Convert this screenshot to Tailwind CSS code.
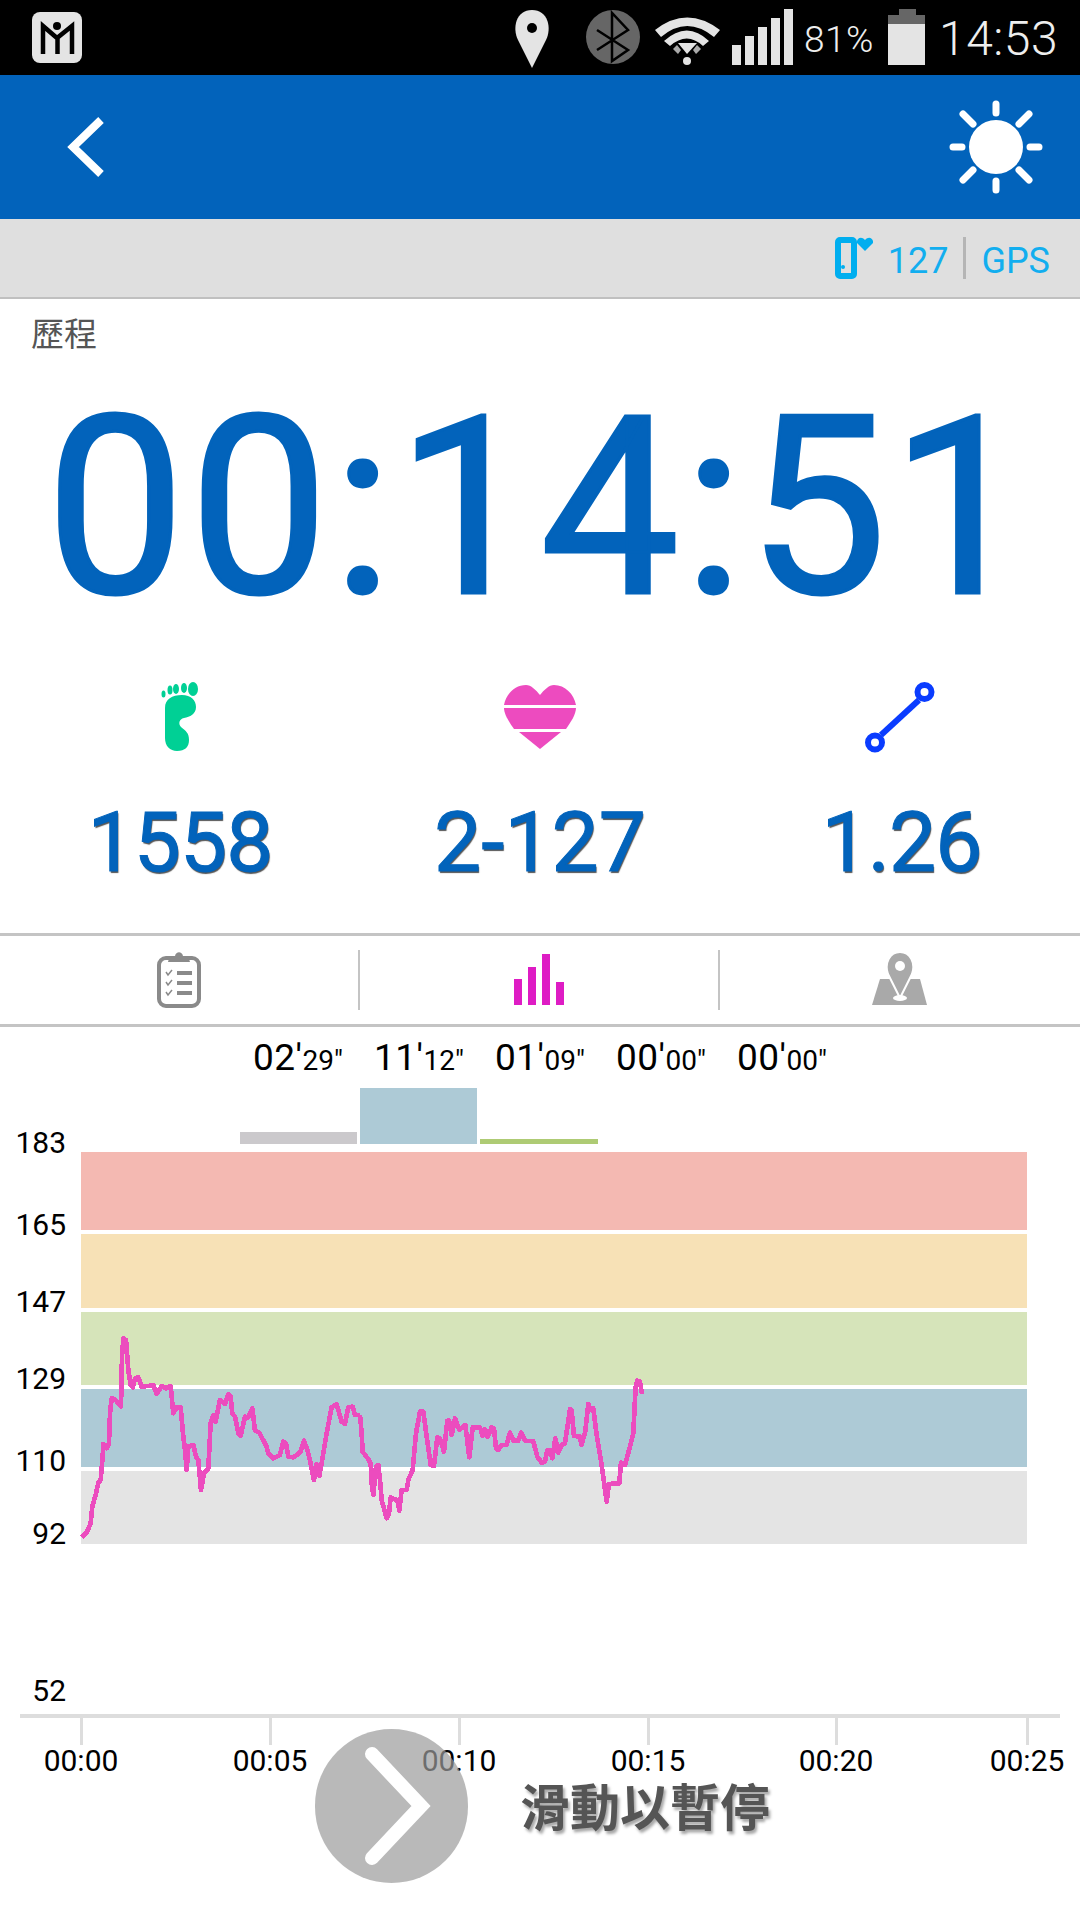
<!doctype html>
<html lang="zh-Hant">
<head>
<meta charset="UTF-8" />
<title>歷程</title>
<script src="https://cdn.jsdelivr.net/npm/@tailwindcss/browser@4"></script>
</head>
<body class="bg-white">
<div class="relative w-[1080px] h-[1920px] overflow-hidden bg-white [font-family:Roboto,sans-serif]">

	<!-- status bar -->
	<div class="relative h-[75px] bg-black">
		<svg class="absolute left-0 top-0" width="1080" height="75" viewBox="0 0 1080 75">
			<rect x="32" y="12" width="50" height="51" rx="8" fill="#e4e4e4"/>
			<path d="M43 54V26L57 38L72 26V54M57.500 38V54" fill="none" stroke="#000" stroke-width="4.500"/>
			<circle cx="57" cy="26" r="4" fill="#000"/>
			<path d="M532 68L518 40C512 28 516 10 532 10C548 10 552 28 546 40Z" fill="#e4e4e4"/>
			<circle cx="532" cy="28" r="5" fill="#000"/>
			<circle cx="613" cy="37" r="27" fill="#666"/>
			<path d="M597 50L628 30L612 13V61L628 50L597 30" fill="none" stroke="#000" stroke-width="2.500"/>
			<path d="M655 30Q687 5 720 30L714 37Q687 15 661 37Z" fill="#e4e4e4"/>
			<path d="M664 41Q687 20 709 41L703 46Q687 31 670 46Z" fill="#e4e4e4"/>
			<path d="M678 43H697L687 54Z" fill="#e4e4e4"/>
			<path d="M673 49L677 45L681 50L678 54ZM701 49L697 45L693 50L696 54Z" fill="#aaa"/>
			<circle cx="687" cy="61" r="4" fill="#e4e4e4"/>
			<path d="M732 45h9v20h-9zM745 36h9v29h-9zM758 27h9v38h-9zM771 18h9v47h-9zM784 9h9v56h-9z" fill="#e4e4e4"/>
			<rect x="899" y="9" width="17" height="6" fill="#666"/>
			<rect x="888" y="15" width="37" height="9" fill="#666"/>
			<rect x="888" y="24" width="37" height="41" fill="#e4e4e4"/>
		</svg>
		<span class="absolute left-[804px] top-[18px] text-[37px] leading-[44px] font-light tracking-[0.5px] text-[#eee]">81%</span>
		<span class="absolute left-[939px] top-[11px] text-[48px] leading-[56px] font-light tracking-[0.5px] text-[#eee]">14:53</span>
	</div>

	<!-- title bar -->
	<div class="flex h-[144px] items-center justify-between bg-[#0263bb] pl-[64px] pr-[36px]">
		<svg width="44" height="64" viewBox="64 115 44 64">
			<path d="M101 120L73 147L101 174" fill="none" stroke="#fff" stroke-width="8"/>
		</svg>
		<svg width="96" height="96" viewBox="948 99 96 96">
			<circle cx="996" cy="147" r="27" fill="#fff"/>
			<path d="M996 104V113M996 181V190M953 147H962M1030 147H1039M963 114L973 124M1029 114L1019 124M963 180L973 170M1029 180L1019 170" stroke="#fff" stroke-width="7" stroke-linecap="round"/>
		</svg>
	</div>

	<!-- sensor bar -->
	<div class="flex h-[80px] items-center justify-end border-b-2 border-[#c0c0c0] bg-[#dfdfdf] pr-[30px] text-[36px] text-[#12aeef]">
		<svg class="mr-[15px]" width="38" height="42" viewBox="835 237 38 42">
			<rect x="838" y="240" width="16" height="36" rx="2" fill="none" stroke="#00aeef" stroke-width="6"/>
			<rect x="843" y="238" width="5" height="3" fill="#00aeef"/>
			<circle cx="843" cy="267" r="2" fill="#00aeef"/>
			<path d="M865 251L857 243C856 239 861 235 865 240C869 235 874 239 873 243Z" fill="#00aeef"/>
		</svg>
		<span class="mt-[6px]">127</span>
		<span class="mx-[15px] h-[42px] w-[3px] bg-[#b5b5b5]"></span>
		<span class="mt-[6px]">GPS</span>
	</div>

	<!-- session timer -->
	<div class="h-[634px]">
		<p class="pl-[31px] pt-[13px] text-[33px] leading-[40px] text-[#555] [font-family:'Noto_Sans_CJK_TC',sans-serif]">歷程</p>
		<p class="mt-[13px] text-center text-[248px] leading-[287px] tracking-[4px] text-[#0263bb] [-webkit-text-stroke:3px_#0263bb]">00:14:51</p>
		<div class="mt-[29px] grid grid-cols-3">
			<div class="flex flex-col items-center">
				<svg class="ml-[-1px] h-[72px]" width="40" height="72" viewBox="160 681 40 72">
					<ellipse cx="193" cy="689" rx="5" ry="7" fill="#00d095"/>
					<ellipse cx="184" cy="688" rx="3" ry="5" fill="#00d095"/>
					<ellipse cx="176" cy="689" rx="3" ry="5" fill="#00d095"/>
					<ellipse cx="170" cy="690" rx="2.500" ry="4.500" fill="#00d095"/>
					<ellipse cx="163.500" cy="694" rx="2" ry="3.500" fill="#00d095"/>
					<path d="M165 708C165 699 172 695 182 695C191 695 196 700 196 707C196 714 190 717 184 718C179 719 178 724 181 727C186 731 189 733 189 740C189 747 185 751 177 751C170 751 165 746 165 738Z" fill="#00d095"/>
				</svg>
			</div>
			<div class="flex flex-col items-center">
				<svg class="h-[72px]" width="76" height="72" viewBox="502 681 76 72">
					<path d="M540 695C536 690 531 685 526 685C515 685 506 694 504 705H576C574 694 565 685 554 685C549 685 544 690 540 695Z" fill="#ed4bbf"/>
					<path d="M504 708H576C576 714 571 722 566 729H514C509 722 504 714 504 708Z" fill="#ed4bbf"/>
					<path d="M519 732H561L540 749Z" fill="#ed4bbf"/>
				</svg>
			</div>
			<div class="flex flex-col items-center">
				<svg class="ml-[-1px] h-[72px]" width="72" height="72" viewBox="864 681 72 72">
					<path d="M919 700L881 735" stroke="#0a3cff" stroke-width="6"/>
					<circle cx="924.500" cy="692" r="7" fill="#fff" stroke="#0a3cff" stroke-width="6"/>
					<circle cx="875" cy="742.500" r="7" fill="#fff" stroke="#0a3cff" stroke-width="6"/>
				</svg>
			</div>
			<p class="mt-[42px] text-center text-[84px] leading-[96px] tracking-[-1px] text-[#0263bb] [-webkit-text-stroke:1px_#0263bb] [text-shadow:1px_2px_1px_#555]">1558</p>
			<p class="mt-[42px] text-center text-[84px] leading-[96px] text-[#0263bb] [-webkit-text-stroke:1px_#0263bb] [text-shadow:1px_2px_1px_#555]">2-127</p>
			<p class="mt-[42px] pl-[3px] text-center text-[84px] leading-[96px] tracking-[-1px] text-[#0263bb] [-webkit-text-stroke:1px_#0263bb] [text-shadow:1px_2px_1px_#555]">1.26</p>
		</div>
	</div>

	<!-- tabs -->
	<div class="grid h-[94px] grid-cols-3 items-center border-y-[3px] border-[#c4c4c4]">
		<div class="flex h-[60px] items-center justify-center border-r-2 border-[#c4c4c4]">
			<svg width="48" height="60" viewBox="155 950 48 60">
				<rect x="159" y="958" width="40" height="48" rx="7" fill="none" stroke="#8a8a8a" stroke-width="4"/>
				<path d="M168 962C169 957 173 957 175 956C176 951 182 951 183 956C185 957 189 957 190 962Z" fill="#8a8a8a"/>
				<path d="M166 972l2 3l4 -5M166 982l2 3l4 -5M166 992l2 3l4 -5" fill="none" stroke="#8a8a8a" stroke-width="1.500"/>
				<path d="M177 973H192M177 983H192M177 993H192" stroke="#8a8a8a" stroke-width="4"/>
			</svg>
		</div>
		<div class="flex h-[60px] items-center justify-center border-r-2 border-[#c4c4c4]">
			<svg width="52" height="54" viewBox="514 954 52 54">
				<path d="M515 980h8v26h-8zM529 968h8v38h-8zM543 955h8v51h-8zM557 983h8v23h-8z" fill="#de1cc4"/>
			</svg>
		</div>
		<div class="flex h-[60px] items-center justify-center">
			<svg width="58" height="54" viewBox="871 954 58 54">
				<path d="M880 980H920L927 1006H872Z" fill="#a9a9a9"/>
				<path d="M900 999L888 975C884 964 890 953 900 953C910 953 916 964 912 975Z" fill="#a9a9a9" stroke="#fff" stroke-width="2"/>
				<circle cx="900" cy="967" r="5" fill="#fff"/>
				<ellipse cx="900" cy="999" rx="7" ry="3" fill="#fff"/>
			</svg>
		</div>
	</div>

	<!-- zone times -->
	<div class="flex h-[62px] items-center justify-center text-black">
		<p class="w-[121px] text-center text-[28px]"><span class="text-[37px] tracking-[0.5px]">02'</span>29"</p>
		<p class="w-[121px] text-center text-[28px]"><span class="text-[37px] tracking-[0.5px]">11'</span>12"</p>
		<p class="w-[121px] text-center text-[28px]"><span class="text-[37px] tracking-[0.5px]">01'</span>09"</p>
		<p class="w-[121px] text-center text-[28px]"><span class="text-[37px] tracking-[0.5px]">00'</span>00"</p>
		<p class="w-[121px] text-center text-[28px]"><span class="text-[37px] tracking-[0.5px]">00'</span>00"</p>
	</div>
	<div class="flex h-[55px] items-end gap-[3px] pl-[240px]">
		<div class="h-[12px] w-[117px] bg-[#cbc9cc]"></div>
		<div class="h-[56px] w-[117px] bg-[#adcad6]"></div>
		<div class="h-[5px] w-[118px] bg-[#aecb74]"></div>
	</div>

	<!-- heart rate chart -->
	<div class="relative mt-[8px]">
		<div class="ml-[81px] flex w-[946px] flex-col gap-[4px]">
			<div class="h-[78px] bg-[#f4b9b2]"></div>
			<div class="h-[74px] bg-[#f7e1b6]"></div>
			<div class="h-[73px] bg-[#d6e4ba]"></div>
			<div class="h-[78px] bg-[#adcad6]"></div>
			<div class="h-[73px] bg-[#e4e4e4]"></div>
		</div>
		<svg class="absolute left-0 top-[-1152px]" width="1080" height="1920" viewBox="0 0 1080 1920" shape-rendering="crispEdges">
			<g transform="translate(60 1300) scale(.3333)" fill="none" stroke="#ec4cbe" stroke-width="14" stroke-linejoin="round">
				<polyline points="65,712 80,698 92,670 97,620 108,580 115,548 122,540 128,470 130,432 140,445 147,430 150,340 155,295 165,298 183,320 186,170 190,115 198,120 205,210 212,255 218,262 225,235 235,232 245,260 280,256 290,282 305,258 318,265 332,258 340,340 350,322 362,322 370,410 375,450 380,510 385,440 400,435 408,470 415,480 423,570 432,520 445,505 452,370 460,345 467,365 480,300 495,312 505,282 512,290 517,340 525,350 535,400 542,408 555,350 565,352 577,325 585,392 598,398 620,440 625,460 640,475 660,465 670,425 678,430 685,470 700,472 715,462 722,455 732,422 742,450 750,480 762,540 770,492 778,528 785,490 800,400 815,322 830,312 845,365 855,372 865,322 878,320 885,345 900,345"/>
			</g>
			<g transform="translate(340 1300) scale(.3333)" fill="none" stroke="#ec4cbe" stroke-width="14" stroke-linejoin="round">
				<polyline points="60,345 65,400 68,455 85,478 92,490 95,550 100,585 108,500 115,495 120,540 125,600 140,655 147,640 152,592 165,598 172,600 178,632 185,570 200,570 205,540 218,510 228,400 240,335 250,335 260,410 272,495 282,498 292,412 300,415 312,455 322,362 327,362 335,405 345,355 358,390 376,375 388,472 398,382 420,382 428,408 435,388 443,410 455,382 462,385 468,445 475,450 485,435 500,435 510,398 520,422 535,422 543,398 555,422 580,424 592,470 605,488 615,485 622,450 630,450 637,475 646,415 655,458 665,435 675,430 690,328 695,330 702,408 720,410 724,435 735,400 745,312 752,330 760,325 770,405 785,495 800,605 807,552 838,550 843,488 855,495 870,440 880,400 887,260 892,242 900,245 906,282"/>
			</g>
		</svg>
		<span class="absolute right-[1014px] top-[-27px] text-[30px] leading-[36px] text-black">183</span>
		<span class="absolute right-[1014px] top-[55px] text-[30px] leading-[36px] text-black">165</span>
		<span class="absolute right-[1014px] top-[132px] text-[30px] leading-[36px] text-black">147</span>
		<span class="absolute right-[1014px] top-[209px] text-[30px] leading-[36px] text-black">129</span>
		<span class="absolute right-[1014px] top-[291px] text-[30px] leading-[36px] text-black">110</span>
		<span class="absolute right-[1014px] top-[364px] text-[30px] leading-[36px] text-black">92</span>
		<span class="absolute right-[1014px] top-[521px] text-[30px] leading-[36px] text-black">52</span>
	</div>

	<!-- time axis -->
	<div class="ml-[20px] mt-[170px] h-[4px] w-[1040px] bg-[#dddddd]"></div>
	<div class="relative h-[70px]">
		<div class="absolute left-[-19px] top-0 flex w-[200px] flex-col items-center"><span class="h-[27px] w-[3px] bg-[#dddddd]"></span><span class="text-[30px] leading-[32px] text-black">00:00</span></div>
		<div class="absolute left-[170px] top-0 flex w-[200px] flex-col items-center"><span class="h-[27px] w-[3px] bg-[#dddddd]"></span><span class="text-[30px] leading-[32px] text-black">00:05</span></div>
		<div class="absolute left-[359px] top-0 flex w-[200px] flex-col items-center"><span class="h-[27px] w-[3px] bg-[#dddddd]"></span><span class="text-[30px] leading-[32px] text-black">00:10</span></div>
		<div class="absolute left-[548px] top-0 flex w-[200px] flex-col items-center"><span class="h-[27px] w-[3px] bg-[#dddddd]"></span><span class="text-[30px] leading-[32px] text-black">00:15</span></div>
		<div class="absolute left-[736px] top-0 flex w-[200px] flex-col items-center"><span class="h-[27px] w-[3px] bg-[#dddddd]"></span><span class="text-[30px] leading-[32px] text-black">00:20</span></div>
		<div class="absolute left-[927px] top-0 flex w-[200px] flex-col items-center"><span class="h-[27px] w-[3px] bg-[#dddddd]"></span><span class="text-[30px] leading-[32px] text-black">00:25</span></div>
	</div>

	<!-- slide to pause, lies over the axis labels -->
	<div class="absolute left-[315px] top-[1729px] flex items-center gap-[52px]">
		<div class="flex h-[154px] w-[153px] items-center justify-center rounded-full bg-[#9b9b9b]/70">
			<svg width="84" height="120" viewBox="350 1746 84 120">
				<path d="M372 1754L421 1806L372 1858" fill="none" stroke="#fff" stroke-width="14" stroke-linecap="round"/>
			</svg>
		</div>
		<span class="mt-[-4px] text-[50px] font-bold leading-[60px] text-[#555] [font-family:'Noto_Sans_CJK_TC',sans-serif] [text-shadow:2px_3px_3px_rgba(0,0,0,0.35)]">滑動以暫停</span>
	</div>
</div>
</body>
</html>
